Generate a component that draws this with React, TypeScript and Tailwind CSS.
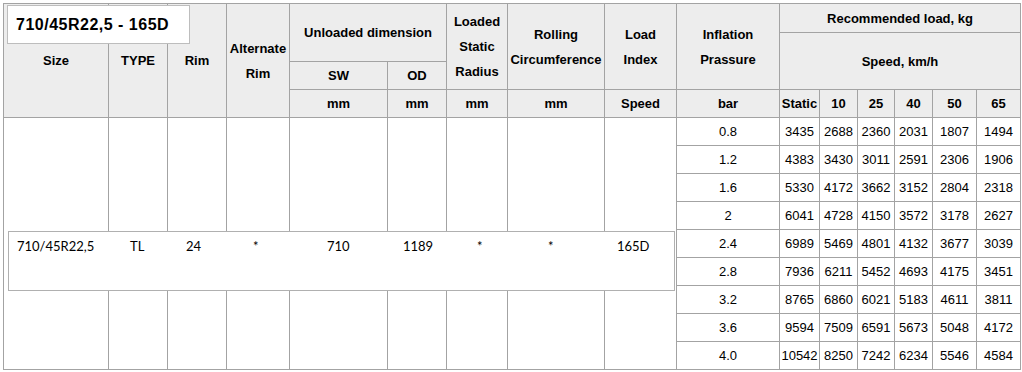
import React from 'react';

const speeds = ['Static', '10', '25', '40', '50', '65'];

const rows: { bar: string; loads: number[] }[] = [
  { bar: '0.8', loads: [3435, 2688, 2360, 2031, 1807, 1494] },
  { bar: '1.2', loads: [4383, 3430, 3011, 2591, 2306, 1906] },
  { bar: '1.6', loads: [5330, 4172, 3662, 3152, 2804, 2318] },
  { bar: '2', loads: [6041, 4728, 4150, 3572, 3178, 2627] },
  { bar: '2.4', loads: [6989, 5469, 4801, 4132, 3677, 3039] },
  { bar: '2.8', loads: [7936, 6211, 5452, 4693, 4175, 3451] },
  { bar: '3.2', loads: [8765, 6860, 6021, 5183, 4611, 3811] },
  { bar: '3.6', loads: [9594, 7509, 6591, 5673, 5048, 4172] },
  { bar: '4.0', loads: [10542, 8250, 7242, 6234, 5546, 4584] },
];

// text box row, widths line the values up under the columns
const tyreRow = [
  { text: '710/45R22,5', w: 'w-[113px]' },
  { text: 'TL', w: 'w-[56px]' },
  { text: '24', w: 'w-[67px]' },
  { text: '*', w: 'w-[74px]' },
  { text: '710', w: 'w-[76px]' },
  { text: '1189', w: 'w-[74px]' },
  { text: '*', w: 'w-[71px]' },
  { text: '*', w: 'w-[69px]' },
  { text: '165D', w: 'w-[50px]' },
];

const head = 'bg-[#ededed] flex items-center justify-center text-center font-bold text-[13px] leading-[25px] text-black';
const cell = 'bg-white flex items-center justify-center text-[13px] text-black';

export default function App() {
  return (
    <div
      className="relative w-[1022px] h-[372px] bg-white overflow-hidden pt-[3px] pl-[3px]"
      style={{ fontFamily: '"Liberation Sans", Arial, sans-serif' }}
    >
      <div className="inline-grid p-px gap-px bg-[#a3a3a3] grid-cols-[104px_58px_58px_62px_97px_58px_60px_96px_71px_102px_39px_37px_36px_37px_43px_43px] grid-rows-[28px_28px_27px_27px_repeat(9,27px)]">
        <div className={`${head} col-start-1 row-start-1 row-span-4`}>Size</div>
        <div className={`${head} col-start-2 row-start-1 row-span-4`}>TYPE</div>
        <div className={`${head} col-start-3 row-start-1 row-span-4`}>Rim</div>
        <div className={`${head} col-start-4 row-start-1 row-span-4`}>
          Alternate
          <br />
          Rim
        </div>
        <div className={`${head} col-start-5 col-span-2 row-start-1 row-span-2`}>Unloaded dimension</div>
        <div className={`${head} col-start-5 row-start-3`}>SW</div>
        <div className={`${head} col-start-6 row-start-3`}>OD</div>
        <div className={`${head} col-start-5 row-start-4`}>mm</div>
        <div className={`${head} col-start-6 row-start-4`}>mm</div>
        <div className={`${head} col-start-7 row-start-1 row-span-3`}>
          Loaded
          <br />
          Static
          <br />
          Radius
        </div>
        <div className={`${head} col-start-7 row-start-4`}>mm</div>
        <div className={`${head} col-start-8 row-start-1 row-span-3`}>
          Rolling
          <br />
          Circumference
        </div>
        <div className={`${head} col-start-8 row-start-4`}>mm</div>
        <div className={`${head} col-start-9 row-start-1 row-span-3`}>
          Load
          <br />
          Index
        </div>
        <div className={`${head} col-start-9 row-start-4`}>Speed</div>
        <div className={`${head} col-start-10 row-start-1 row-span-3`}>
          Inflation
          <br />
          Prassure
        </div>
        <div className={`${head} col-start-10 row-start-4`}>bar</div>
        <div className={`${head} col-start-11 col-span-6 row-start-1`}>Recommended load, kg</div>
        <div className={`${head} col-start-11 col-span-6 row-start-2 row-span-2`}>Speed, km/h</div>
        {speeds.map((s) => (
          <div key={s} className={`${head} row-start-4`}>
            {s}
          </div>
        ))}

        {/* merged body cells on the left */}
        <div className="bg-white col-start-1 row-start-5 row-span-9" />
        <div className="bg-white col-start-2 row-start-5 row-span-9" />
        <div className="bg-white col-start-3 row-start-5 row-span-9" />
        <div className="bg-white col-start-4 row-start-5 row-span-9" />
        <div className="bg-white col-start-5 row-start-5 row-span-9" />
        <div className="bg-white col-start-6 row-start-5 row-span-9" />
        <div className="bg-white col-start-7 row-start-5 row-span-9" />
        <div className="bg-white col-start-8 row-start-5 row-span-9" />
        <div className="bg-white col-start-9 row-start-5 row-span-9" />

        {rows.map((r) => (
          <React.Fragment key={r.bar}>
            <div className={`${cell} col-start-10`}>{r.bar}</div>
            {r.loads.map((v, i) => (
              <div key={i} className={cell}>
                {v}
              </div>
            ))}
          </React.Fragment>
        ))}
      </div>

      {/* title text box */}
      <div className="absolute left-[7px] top-[5px] w-[183px] h-[39px] bg-white border border-[#bdbdbd] flex items-center pl-[8px] font-bold text-[16px] tracking-[0.5px] text-black">
        710/45R22,5 - 165D
      </div>

      {/* row text box */}
      <div
        className="absolute left-[8px] top-[231px] w-[667px] h-[60px] bg-white border border-[#b0b0b0] flex items-start pt-[5px] pl-[8px] text-[13px] text-black"
        style={{ fontFamily: 'Lato, "Liberation Sans", sans-serif' }}
      >
        {tyreRow.map((t, i) => (
          <span key={i} className={`${t.w} shrink-0`}>
            {t.text}
          </span>
        ))}
      </div>
    </div>
  );
}
